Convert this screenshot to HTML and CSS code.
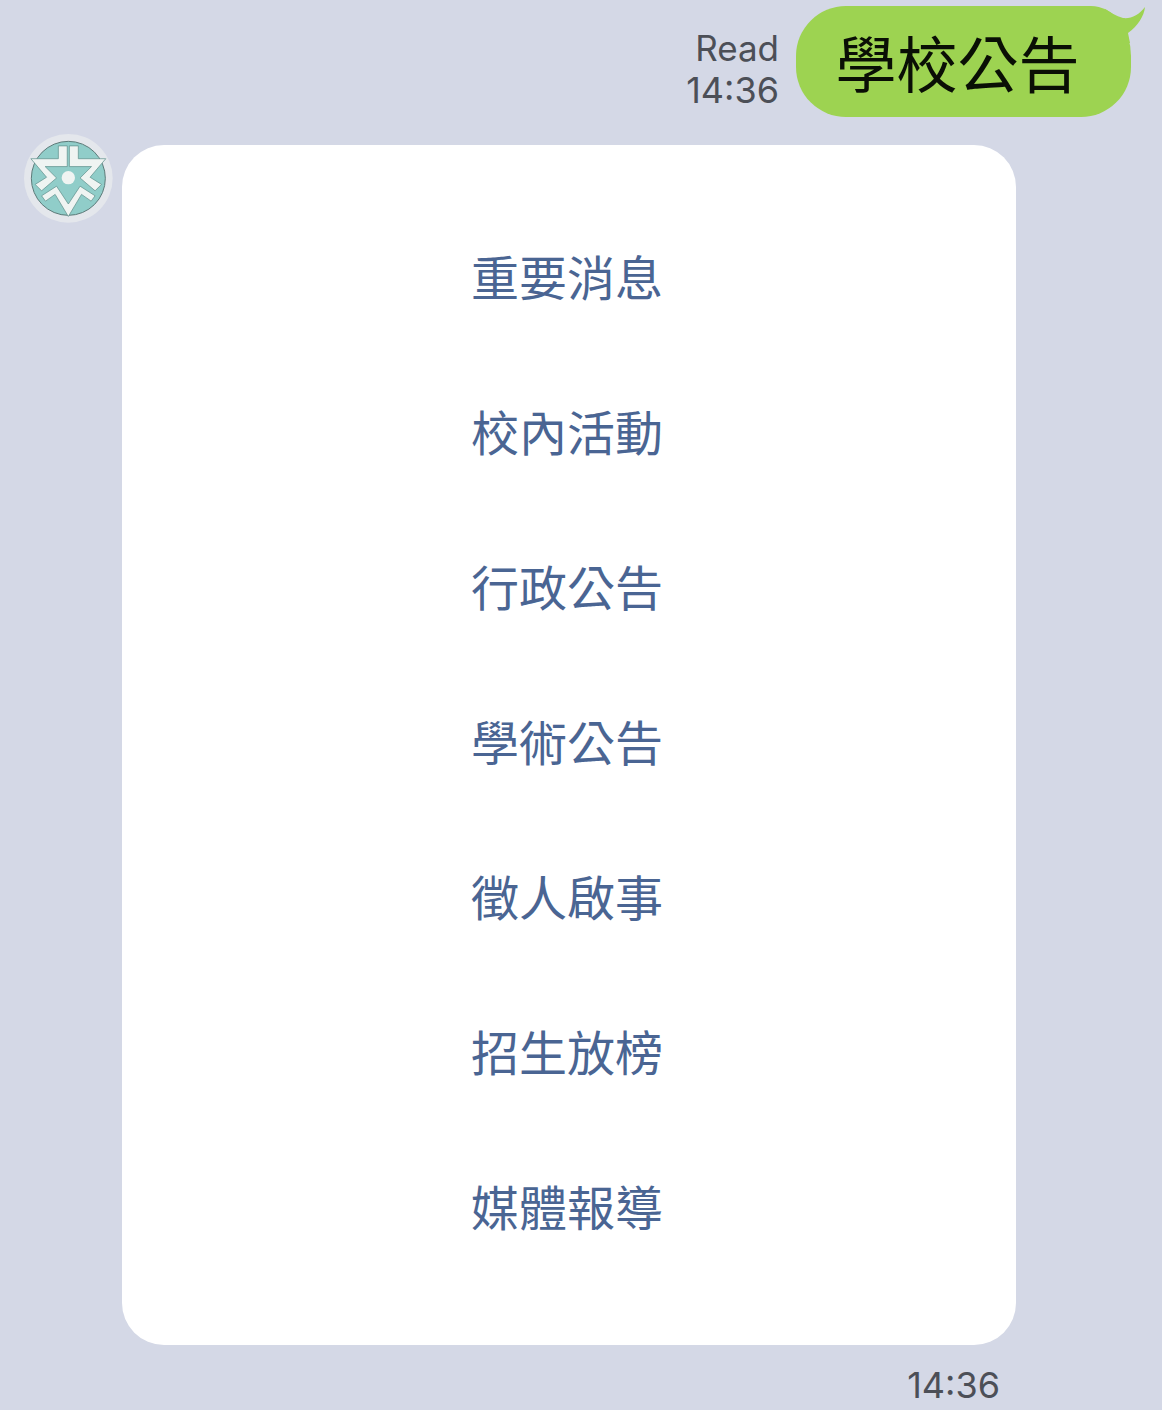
FILE: index.html
```html
<!DOCTYPE html>
<html lang="zh-Hant">
<head>
<meta charset="utf-8">
<title>學校公告</title>
<link rel="stylesheet" href="styles.css">
</head>
<body>
<div class="chat">
  <div class="sent">
    <div class="meta">
      <span class="meta-read">Read</span>
      <span class="meta-time">14:36</span>
    </div>
    <div class="bubble">
      <span class="bubble-text">學校公告</span>
      <svg class="tail" width="46" height="40" viewBox="0 0 46 40"><path d="M5 5 C10 8 16 12 23 14 C31 15 39 11 45 3 C44 12 38 22 28 29 L30 39 L5 39 Z" fill="#9dd351"/></svg>
    </div>
  </div>
  <div class="received">
    <div class="avatar">
      <svg width="90" height="90" viewBox="0 0 270 270">
        <circle cx="133" cy="133" r="133" fill="#e4e7ec"/>
        <circle cx="133" cy="133" r="111" fill="#90cdc9" stroke="#5c7a78" stroke-width="3"/>
        <g fill="#eff4f2" stroke="#5f8f8c" stroke-width="2" stroke-linejoin="miter" transform="translate(133 133) scale(1.07) translate(-133 -133)">
          <path d="M105 42 H130 V100 H68 L100 132 L58 168 L40 150 L72 130 L28 78 H105 Z"/>
          <path d="M161 42 H136 V100 H198 L166 132 L208 168 L226 150 L194 130 L238 78 H161 Z"/>
          <path d="M58 182 L100 155 L133 205 L166 155 L208 182 L197 197 L170 178 L133 240 L96 178 L69 197 Z"/>
        </g>
        <circle cx="133" cy="131" r="20" fill="#eff4f2"/>
      </svg>
    </div>
    <div class="card-col">
      <ul class="card">
        <li class="item">重要消息</li>
        <li class="item">校內活動</li>
        <li class="item">行政公告</li>
        <li class="item">學術公告</li>
        <li class="item">徵人啟事</li>
        <li class="item">招生放榜</li>
        <li class="item">媒體報導</li>
      </ul>
      <div class="card-time">14:36</div>
    </div>
  </div>
</div>
</body>
</html>
```
FILE: styles.css
```css
html, body {
  margin: 0;
  padding: 0;
}
body {
  background: #d4d8e6;
  height: 1410px;
  overflow: hidden;
  font-family: "Noto Sans CJK TC", "Noto Sans", sans-serif;
}
.chat {
  display: flex;
  flex-direction: column;
  padding-top: 6px;
}
.sent {
  display: flex;
  justify-content: flex-end;
  align-items: flex-end;
  gap: 17px;
  padding-right: 31px;
}
.meta {
  display: flex;
  flex-direction: column;
  align-items: flex-end;
  font-family: "Inter", "Liberation Sans", sans-serif;
  font-size: 35px;
  line-height: 42px;
  color: #4c4f57;
  padding-bottom: 6px;
}
.meta-time {
  font-size: 36px;
}
.bubble {
  position: relative;
  box-sizing: border-box;
  width: 335px;
  height: 111px;
  padding-right: 12px;
  border-radius: 50px;
  border-top-right-radius: 40px 50px;
  background: #9dd351;
  color: #0a0f05;
  font-size: 61px;
  line-height: 111px;
  text-align: center;
}
.bubble-text {
  position: relative;
}
.tail {
  position: absolute;
  top: -2px;
  right: -15px;
}
.received {
  display: flex;
  align-items: flex-start;
  gap: 8px;
  padding-left: 24px;
  margin-top: 17px;
}
.avatar {
  width: 90px;
  height: 90px;
}
.avatar svg {
  display: block;
}
.card-col {
  display: flex;
  flex-direction: column;
  margin-top: 11px;
  width: 894px;
}
.card {
  list-style: none;
  margin: 0;
  box-sizing: border-box;
  height: 1200px;
  padding: 53px 4px 0 0;
  background: #fff;
  border-radius: 42px;
}
.item {
  height: 155px;
  line-height: 155px;
  text-align: center;
  font-size: 48px;
  color: #4a6593;
}
.card-time {
  align-self: flex-end;
  margin-top: 19px;
  margin-right: 16px;
  font-family: "Inter", "Liberation Sans", sans-serif;
  font-size: 36px;
  line-height: 42px;
  color: #4c4f57;
}
```
